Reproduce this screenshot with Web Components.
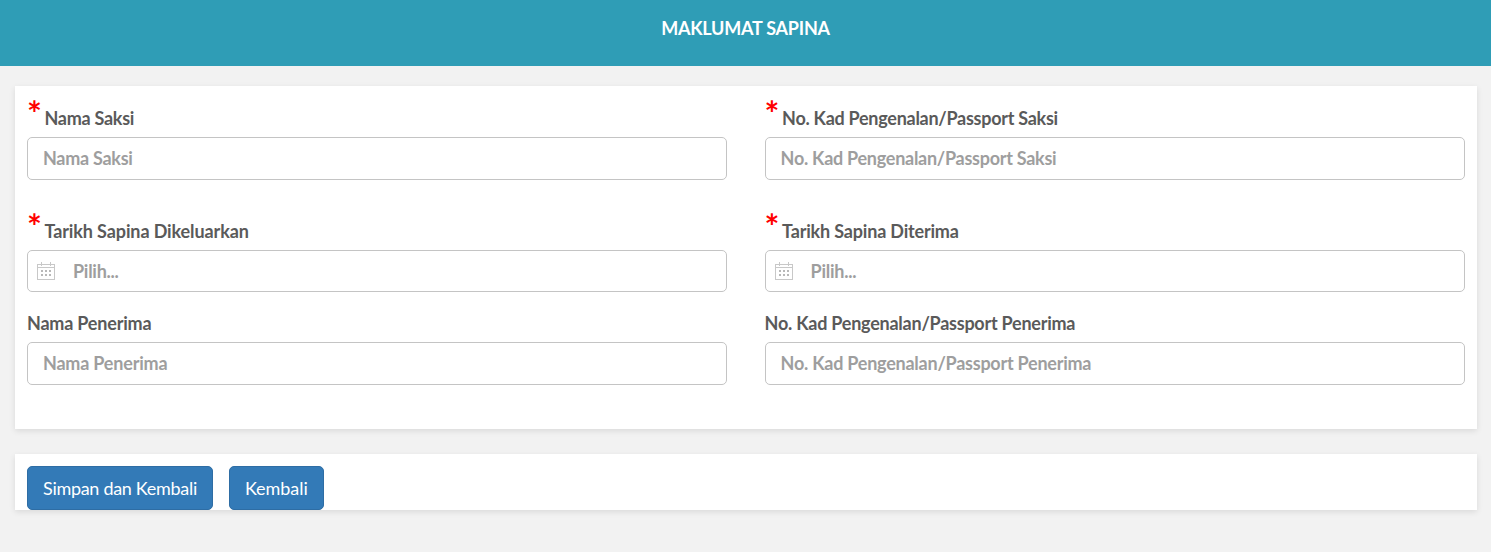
<!DOCTYPE html>
<html>
<head>
<meta charset="utf-8">
<title>Maklumat Sapina</title>
<style>
	html, body { margin: 0; padding: 0; height: 100%; }
	body { background: #f2f2f2; font-family: Lato, "Liberation Sans", sans-serif; overflow: hidden; }
</style>
</head>
<body>
<template id="field-tpl">
	<style>
		:host { display: block; height: var(--h, 113px); color: #5a5a5a; }
		#label { display: flex; align-items: flex-end; height: 33px; font-size: 18px; font-weight: 700; letter-spacing: var(--ls, -0.27px); line-height: 22px; padding-bottom: 8px; }
		#star { display: none; color: #f00; font-size: 35px; font-weight: 700; letter-spacing: 0; line-height: 22px; width: 17.5px; height: 22px; margin-top: 5px; margin-left: -1px; padding-left: 1px; align-self: flex-start; }
		:host([required]) #star { display: block; }
		#box { display: flex; align-items: center; box-sizing: border-box; height: var(--input-h, 43px); background: #fff; border: 1px solid #c4c4c4; border-radius: 5px; padding: 0 0 1px 15px; font-size: 18px; font-weight: 700; letter-spacing: var(--hint-ls, -0.27px); color: #9e9e9e; }
		:host([date]) #box { padding: 0 0 0 8px; }
		#icon { display: none; width: 19px; height: 19px; margin-right: 18px; }
		:host([date]) #icon { display: block; }
	</style>
	<div id="label"><span id="star">*</span><span id="text"></span></div>
	<div id="box">
		<svg id="icon" viewBox="0 0 19 19" fill="none" stroke="#c8c8c8" stroke-width="1">
			<rect x="1.5" y="2.5" width="17" height="15"/>
			<path d="M5.5 0v4M14.5 0v4M1.5 5.5h17"/>
			<path d="M5 9h2M9 9h2M13 9h2M5 13h2M9 13h2M13 13h2" stroke="#b8b8b8" stroke-width="2"/>
		</svg>
		<span id="hint"></span>
	</div>
</template>

<template id="header-tpl">
	<style>
		:host { display: block; height: 66px; box-sizing: border-box; padding-top: 17px; background: #2f9db6; color: #fff; text-align: center; font-size: 18px; font-weight: 700; line-height: 22px; letter-spacing: -0.23px; }
	</style>
	<slot></slot>
</template>

<template id="card-tpl">
	<style>
		:host { display: block; margin: 0 14px 0 15px; background: #fff; box-shadow: 0 2px 6px rgba(0,0,0,.1); }
	</style>
	<slot></slot>
</template>

<template id="btn-tpl">
	<style>
		:host { display: inline-block; box-sizing: border-box; height: 44px; padding: 0 15px; background: #337ab7; border: 1px solid #2e6da4; border-radius: 5px; color: #fff; font-size: 18px; font-weight: 400; line-height: 42px; letter-spacing: var(--ls, -0.3px); }
	</style>
	<slot></slot>
</template>

<sapina-header>MAKLUMAT SAPINA</sapina-header>

<sapina-card style="margin-top:20px;height:343px;padding:10px 12px 0;box-sizing:border-box;display:grid;grid-template-columns:700px 700px;column-gap:37.6px;align-content:start">
	<sapina-field required label="Nama Saksi" hint="Nama Saksi"></sapina-field>
	<sapina-field required label="No. Kad Pengenalan/Passport Saksi" hint="No. Kad Pengenalan/Passport Saksi"></sapina-field>
	<sapina-field required date label="Tarikh Sapina Dikeluarkan" hint="Pilih..." style="--input-h:42px;--h:92px;--ls:-0.11px"></sapina-field>
	<sapina-field required date label="Tarikh Sapina Diterima" hint="Pilih..." style="--input-h:42px;--h:92px;--ls:-0.18px"></sapina-field>
	<sapina-field label="Nama Penerima" hint="Nama Penerima" style="--ls:-0.2px;--hint-ls:-0.2px"></sapina-field>
	<sapina-field label="No. Kad Pengenalan/Passport Penerima" hint="No. Kad Pengenalan/Passport Penerima" style="--ls:-0.24px;--hint-ls:-0.24px"></sapina-field>
</sapina-card>

<sapina-card style="margin-top:25px;height:56px;padding:12px 12px 0;box-sizing:border-box;display:flex;gap:16px">
	<sapina-btn>Simpan dan Kembali</sapina-btn>
	<sapina-btn style="--ls:-0.05px">Kembali</sapina-btn>
</sapina-card>

<script>
function plain(name, tpl) {
	customElements.define(name, class extends HTMLElement {
		constructor() {
			super();
			this.attachShadow({ mode: "open" });
			this.shadowRoot.appendChild(document.getElementById(tpl).content.cloneNode(true));
		}
	});
}
plain("sapina-header", "header-tpl");
plain("sapina-card", "card-tpl");
plain("sapina-btn", "btn-tpl");

class SapinaField extends HTMLElement {
	constructor() {
		super();
		this.attachShadow({ mode: "open" });
		this.shadowRoot.appendChild(document.getElementById("field-tpl").content.cloneNode(true));
	}

	connectedCallback() {
		this.shadowRoot.querySelector("#text").textContent = this.getAttribute("label");
		this.shadowRoot.querySelector("#hint").textContent = this.getAttribute("hint");
	}
}
customElements.define("sapina-field", SapinaField);
</script>
</body>
</html>
